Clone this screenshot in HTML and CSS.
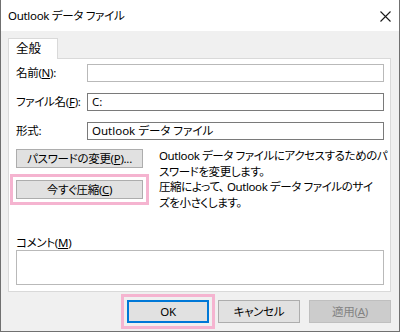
FILE: index.html
```html
<!DOCTYPE html>
<html lang="ja">
<head>
<meta charset="utf-8">
<link rel="stylesheet" href="styles.css">
</head>
<body>
<div class="window">
  <div class="titlebar">
    <span class="title">Outlook データ ファイル</span>
    <svg class="close" width="11" height="11" viewBox="0 0 11 11"><path d="M0.5 0.5 L10.5 10.5 M10.5 0.5 L0.5 10.5" stroke="#1a1a1a" stroke-width="1.1" fill="none"/></svg>
  </div>
  <div class="client">
    <div class="tabs"><div class="tab">全般</div></div>
    <div class="panel">
      <div class="field"><span class="label">名前(<u>N</u>):</span><div class="input light"></div></div>
      <div class="field"><span class="label">ファイル名(<u>F</u>):</span><div class="input">C:</div></div>
      <div class="field"><span class="label">形式:</span><div class="input">Outlook データ ファイル</div></div>
      <div class="action first">
        <button class="btn wide">パスワードの変更(<u>P</u>)...</button>
        <p class="desc">Outlook データ ファイルにアクセスするためのパ<br>スワードを変更します。</p>
      </div>
      <div class="action">
        <button class="btn wide hl">今すぐ圧縮(<u>C</u>)</button>
        <p class="desc">圧縮によって、 Outlook データ ファイルのサイ<br>ズを小さくします。</p>
      </div>
      <div class="comment">
        <span class="label">コメント(<u>M</u>)</span>
        <div class="textarea"></div>
      </div>
    </div>
    <div class="footer">
      <button class="btn foot default hl">OK</button>
      <button class="btn foot">キャンセル</button>
      <button class="btn foot disabled">適用(<u>A</u>)</button>
    </div>
  </div>
</div>
</body>
</html>
```

FILE: styles.css
```css
html, body {
  margin: 0;
  padding: 0;
}
body {
  width: 400px;
  height: 332px;
  overflow: hidden;
  background: #fff;
  font-family: "Noto Sans", "Noto Sans CJK JP", sans-serif;
  font-size: 11.5px;
  font-feature-settings: "palt" 1;
  color: #000;
}
.window {
  width: 400px;
  height: 332px;
  box-sizing: border-box;
  border: 1px solid #707070;
  border-top: none;
  display: flex;
  flex-direction: column;
}
.titlebar {
  height: 30px;
  flex: none;
  background: #fff;
  display: flex;
  align-items: center;
  justify-content: space-between;
  padding: 1px 8px 0 7px;
}
.title {
  font-size: 11.5px;
  line-height: 16px;
  letter-spacing: -0.3px;
}
.close {
  display: block;
}
.client {
  flex: 1;
  background: #f0f0f0;
  padding: 7px 8px 0 7px;
  display: flex;
  flex-direction: column;
}
.tabs {
  display: flex;
  height: 20px;
}
.tab {
  width: 50px;
  height: 21px;
  box-sizing: border-box;
  border: 1px solid #d9d9d9;
  border-bottom: none;
  background: #fff;
  font-size: 12.5px;
  line-height: 20px;
  padding-left: 7px;
  position: relative;
  z-index: 1;
}
.panel {
  height: 234px;
  box-sizing: border-box;
  border: 1px solid #d9d9d9;
  background: #fff;
  padding: 5px 6px 0 7px;
  display: flex;
  flex-direction: column;
}
.field {
  display: flex;
  align-items: center;
  height: 18px;
  margin-bottom: 11px;
}
.field:nth-child(3) {
  margin-bottom: 0;
}
.label {
  width: 71px;
  flex: none;
  line-height: 16px;
  white-space: nowrap;
  letter-spacing: -0.3px;
}
.input {
  flex: 1;
  height: 18px;
  box-sizing: border-box;
  border: 1px solid #7a7a7a;
  background: #fff;
  padding-left: 4px;
  line-height: 16px;
  white-space: nowrap;
}
.input.light {
  border-color: #b9b9b9;
}
.action {
  display: flex;
  gap: 16px;
  height: 31px;
}
.action.first {
  margin-top: 9px;
}
.btn {
  font-family: inherit;
  font-size: 11.5px;
  font-feature-settings: "palt" 1;
  letter-spacing: -0.3px;
  color: #000;
  background: #e1e1e1;
  border: 1px solid #adadad;
  padding: 0;
  margin: 0;
  box-sizing: border-box;
  line-height: 16px;
}
.btn.wide {
  width: 127px;
  height: 19px;
  flex: none;
}
.desc {
  margin: -1px 0 0 0;
  line-height: 16px;
  white-space: nowrap;
  letter-spacing: -0.4px;
}
.hl {
  outline: 3px solid #f5b4d0;
  outline-offset: 3px;
}
.comment {
  margin-top: 25px;
  display: flex;
  flex-direction: column;
}
.comment .label {
  line-height: 14px;
}
.textarea {
  height: 35px;
  box-sizing: border-box;
  border: 1px solid #b9b9b9;
  background: #fff;
}
.footer {
  margin-top: 8px;
  display: flex;
  justify-content: flex-end;
  gap: 9px;
}
.btn.foot {
  width: 82px;
  height: 23px;
}
.btn.default {
  border-color: #0078d7;
  box-shadow: inset 0 0 0 1px #0078d7;
}
.btn.disabled {
  background: #cccccc;
  border-color: #bfbfbf;
  color: #838383;
}
```
